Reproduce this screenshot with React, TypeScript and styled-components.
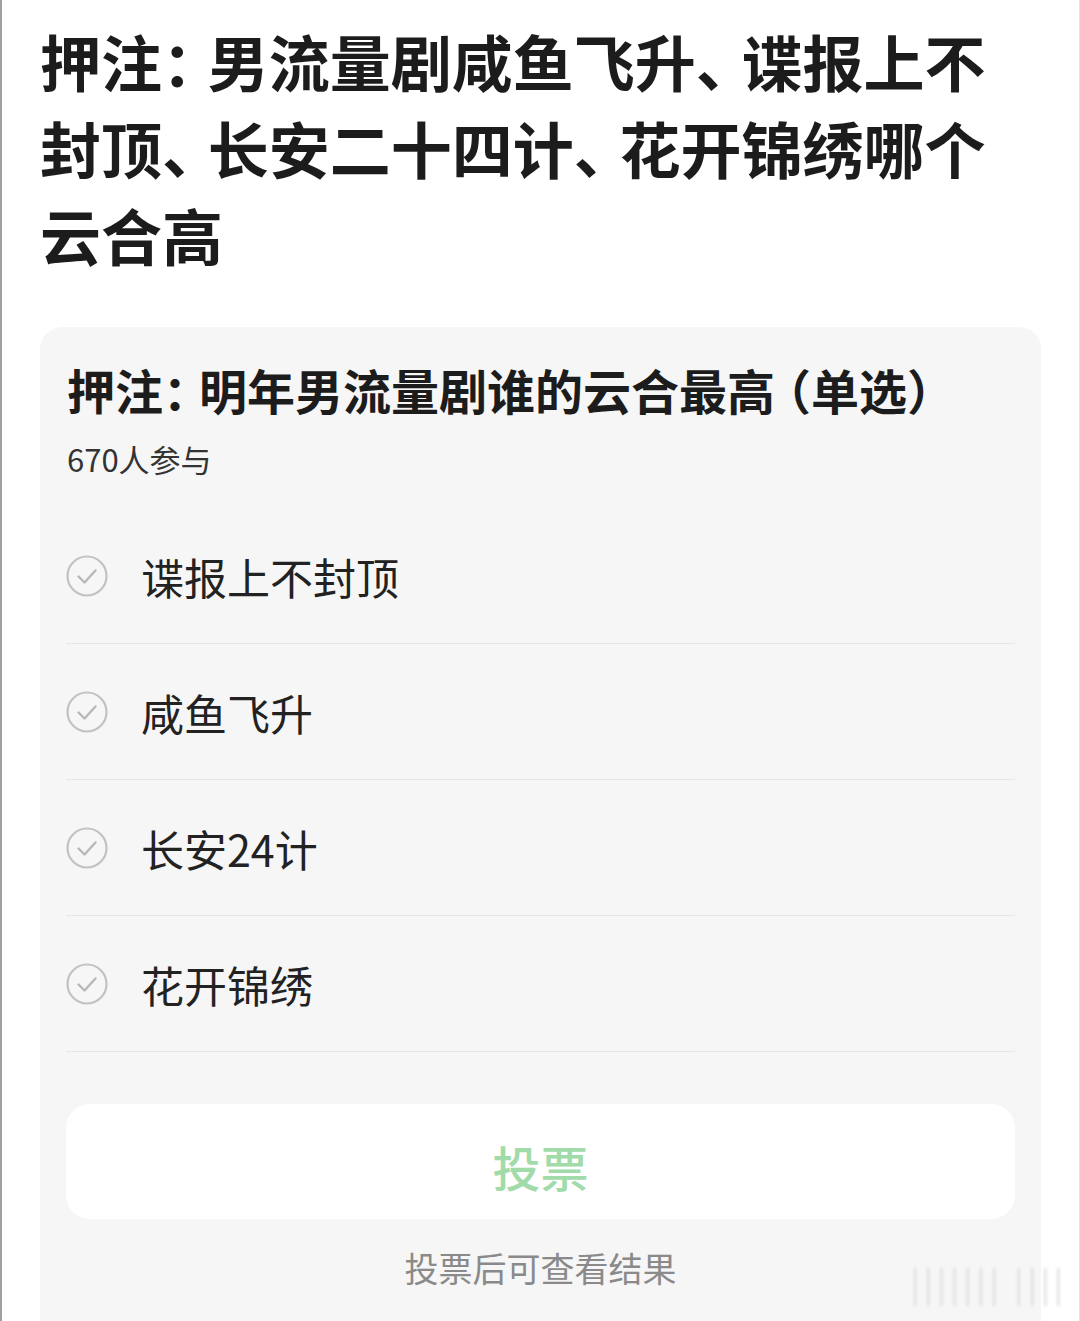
import styled, { createGlobalStyle } from 'styled-components';

const GlobalStyle = createGlobalStyle`
    html, body {
        margin: 0;
        padding: 0;
        background: #ffffff;
        overflow: hidden;
    }
    body {
        font-family: "Noto Sans CJK SC", "Noto Sans", sans-serif;
    }
`;

const Page = styled.div`
    position: relative;
    width: 1080px;
    height: 1321px;
    box-sizing: border-box;
    border-left: 2px solid #a0a0a0;
    border-right: 1px solid #e4e4e4;
    padding: 17px 38px 0 38px;
    overflow: hidden;
`;

const Headline = styled.h1`
    margin: 0;
    font-size: 61px;
    line-height: 87px;
    font-weight: 700;
    color: #1c1c1c;
`;

// half-width punctuation glyph plus a quarter em, so it takes 0.75em
const Punct = styled.span<{ $open?: boolean }>`
    font-feature-settings: "halt";
    ${({ $open }) => ($open ? 'padding-left: 0.25em;' : 'padding-right: 0.25em;')}
`;

const Card = styled.section`
    margin-top: 49px;
    background: #f6f6f6;
    border-radius: 22px;
    padding: 34px 26px 80px 26px;
`;

const CardTitle = styled.h2`
    margin: 0 0 0 1px;
    font-size: 48px;
    line-height: 56px;
    font-weight: 700;
    color: #1c1c1c;
`;

const Participants = styled.p`
    margin: 22px 0 0 1px;
    font-size: 31px;
    line-height: 40px;
    color: #333333;
`;

const OptionList = styled.ul`
    list-style: none;
    margin: 29px 0 0 0;
    padding: 0;
`;

const OptionRow = styled.li`
    display: flex;
    align-items: center;
    gap: 33px;
    height: 135px;
    border-bottom: 1.5px solid #e6e6e6;
`;

const OptionText = styled.span`
    font-size: 43px;
    line-height: 50px;
    color: #222222;
`;

const VoteButton = styled.button`
    display: block;
    width: 100%;
    height: 115px;
    margin-top: 52px;
    padding: 8px 0 0 0;
    border: none;
    border-radius: 24px;
    background: #ffffff;
    color: #a2dbaa;
    font-family: "Noto Sans CJK SC", "Noto Sans", sans-serif;
    font-size: 48px;
    font-weight: 500;
    cursor: default;
`;

const Hint = styled.p`
    margin: 27px 0 0 0;
    text-align: center;
    font-size: 34px;
    line-height: 44px;
    color: #8a8a8a;
`;

const Watermark = styled.div`
    position: absolute;
    right: 12px;
    bottom: 14px;
    font-size: 34px;
    letter-spacing: 4px;
    color: #dcdcdc;
    filter: blur(1.8px);
`;

function CheckCircle() {
    return (
        <svg width="42" height="42" viewBox="0 0 42 42" fill="none">
            <circle cx="21" cy="21" r="19.5" stroke="#c2c2c2" strokeWidth="2.2" />
            <path d="M12.5 21.5 L18.5 27.5 L29.5 15.5" stroke="#b8b8b8" strokeWidth="2.4" strokeLinecap="round" strokeLinejoin="round" />
        </svg>
    );
}

const options = ['谍报上不封顶', '咸鱼飞升', '长安24计', '花开锦绣'];

export default function App() {
    return (
        <>
            <GlobalStyle />
            <Page>
                <Headline>
                    <span>押注</span><Punct>：</Punct><span>男流量剧咸鱼飞升</span><Punct>、</Punct>
                    <span>谍报上不</span><span>封顶</span><Punct>、</Punct><span>长安二十四计</span><Punct>、</Punct>
                    <span>花开锦绣哪个</span><span>云合高</span>
                </Headline>
                <Card>
                    <CardTitle>
                        押注<Punct>：</Punct>明年男流量剧谁的云合最高<Punct $open>（</Punct>单选<Punct>）</Punct>
                    </CardTitle>
                    <Participants>670人参与</Participants>
                    <OptionList>
                        {options.map((o) => (
                            <OptionRow key={o}>
                                <CheckCircle />
                                <OptionText>{o}</OptionText>
                            </OptionRow>
                        ))}
                    </OptionList>
                    <VoteButton>投票</VoteButton>
                    <Hint>投票后可查看结果</Hint>
                </Card>
                <Watermark>||||||| ||||</Watermark>
            </Page>
        </>
    );
}
